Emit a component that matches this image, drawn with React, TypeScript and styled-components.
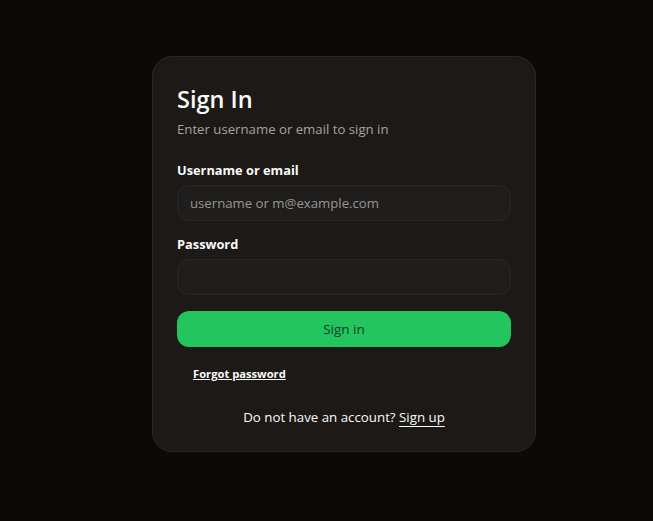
import React from "react";
import styled, { createGlobalStyle } from "styled-components";

const Global = createGlobalStyle`
  html, body { margin: 0; padding: 0; background: #0c0a09; }
  body { font-family: "Open Sans", "Noto Sans", sans-serif; color: #fafaf9; }
  * { box-sizing: border-box; }
`;

const Page = styled.div`
  min-height: 521px;
  display: flex;
  justify-content: center;
  align-items: flex-start;
  padding: 56px 0 0 35px;
`;

const Card = styled.div`
  width: 384px;
  background: #1c1917;
  border: 1px solid #2b2725;
  border-radius: 20px;
  padding: 26px 24px 24px;
  display: flex;
  flex-direction: column;
`;

const Title = styled.h1`
  margin: 0;
  font-size: 23.5px;
  font-weight: 600;
  line-height: 32px;
  color: #fafaf9;
`;

const Subtitle = styled.p`
  margin: 4px 0 0;
  font-size: 13.2px;
  line-height: 20px;
  color: #a8a29e;
`;

const Form = styled.form`
  margin-top: 21px;
  display: flex;
  flex-direction: column;
`;

const Field = styled.div<{ $gap?: number }>`
  display: flex;
  flex-direction: column;
  gap: 5px;
  margin-bottom: ${(p) => p.$gap ?? 13}px;
`;

const Label = styled.label`
  font-size: 12.8px;
  font-weight: 700;
  line-height: 20px;
  color: #fafaf9;
`;

const Input = styled.input`
  height: 36px;
  width: 100%;
  border: 1px solid #2a2725;
  background: #1f1e1d;
  border-radius: 12px;
  padding: 0 12px;
  font-family: inherit;
  font-size: 13.2px;
  color: #fafaf9;
  outline: none;
  &::placeholder { color: #9a9591; }
`;

const Button = styled.button`
  height: 36px;
  width: 100%;
  border: none;
  border-radius: 12px;
  background: #22c55e;
  color: #123b22;
  font-family: inherit;
  font-size: 13.5px;
  font-weight: 500;
  cursor: pointer;
`;

const LinkRow = styled.div`
  padding: 18px 16px 0;
  font-size: 11.2px;
  line-height: 18px;
`;

const SmallLink = styled.a`
  color: #fafaf9;
  font-weight: 700;
  text-decoration: underline;
`;

const Footer = styled.div`
  margin-top: 24px;
  text-align: center;
  font-size: 13.3px;
  line-height: 20px;
  color: #fafaf9;
`;

const FooterLink = styled.a`
  color: #fafaf9;
  text-decoration: underline;
  text-underline-offset: 4px;
`;

export default function App() {
  return (
    <>
      <Global />
      <Page>
        <Card>
          <Title>Sign In</Title>
          <Subtitle>Enter username or email to sign in</Subtitle>
          <Form onSubmit={(e) => e.preventDefault()}>
            <Field>
              <Label htmlFor="user">Username or email</Label>
              <Input id="user" placeholder="username or m@example.com" />
            </Field>
            <Field $gap={16}>
              <Label htmlFor="pw">Password</Label>
              <Input id="pw" type="password" />
            </Field>
            <Button type="submit">Sign in</Button>
          </Form>
          <LinkRow>
            <SmallLink href="#">Forgot password</SmallLink>
          </LinkRow>
          <Footer>
            Do not have an account? <FooterLink href="#">Sign up</FooterLink>
          </Footer>
        </Card>
      </Page>
    </>
  );
}
